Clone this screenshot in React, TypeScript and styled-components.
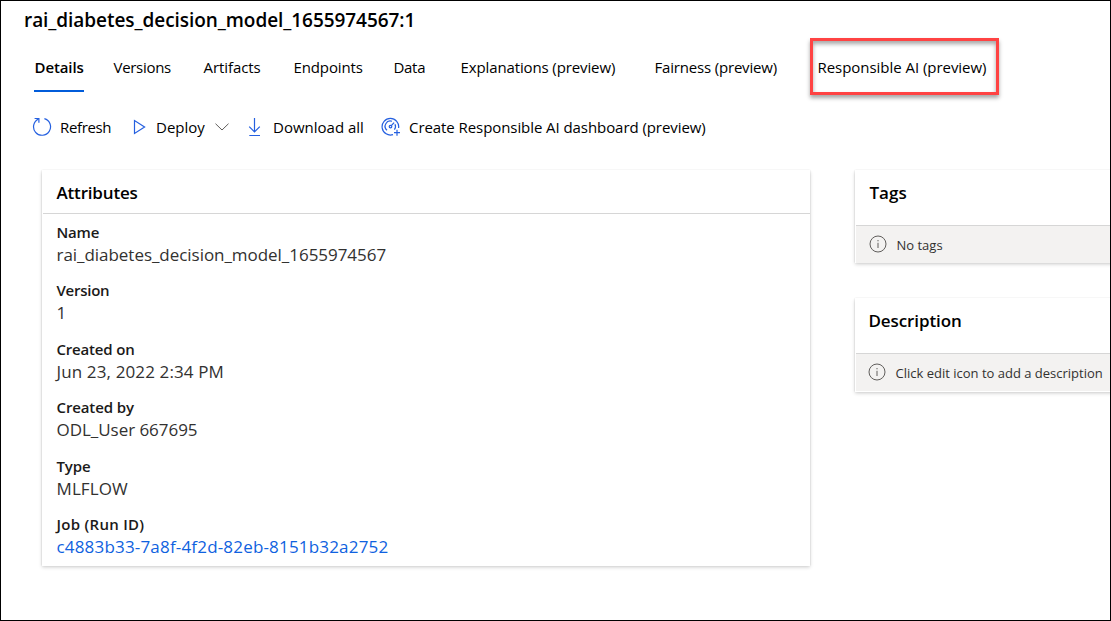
import React from "react";
import styled, { createGlobalStyle } from "styled-components";

const Global = createGlobalStyle`
  *, *::before, *::after { box-sizing: border-box; }
  html, body { margin: 0; padding: 0; background: #fff; }
  body { font-family: "Open Sans", "Noto Sans", sans-serif; color: #000; overflow: hidden; }
`;

const Page = styled.div`
  width: 1111px;
  height: 621px;
  border: 1px solid #000;
  background: #fff;
  overflow: hidden;
`;

const Title = styled.h1<{ $track: number }>`
  margin: 6px 0 0 23px;
  font-size: 19px;
  line-height: 26px;
  font-weight: 600;
  white-space: nowrap;
  letter-spacing: ${(p) => p.$track}px;
`;

const Tabs = styled.nav`
  display: grid;
  grid-template-columns: 79px 90px 90px 100px 67px 194px 156px 189px;
  margin: 5px 0 0 33px;
  height: 60px;
`;

const Tab = styled.div<{ $track?: number }>`
  padding: 18px 0 0 0.5px;
  font-size: 15px;
  line-height: 22px;
  white-space: nowrap;
  letter-spacing: ${(p) => p.$track ?? 0}px;
`;

const ActiveTab = styled(Tab)`
  width: 50px;
  height: 54px;
  font-weight: 600;
  border-bottom: 2px solid #015cda;
`;

const HighlightTab = styled(Tab)`
  height: 57px;
  padding: 15px 0 0 4.5px;
  border: 3px solid #ff4343;
  box-shadow: 0 3px 4px rgba(0, 0, 0, 0.35), inset 0 3px 4px rgba(0, 0, 0, 0.35);
`;

const Toolbar = styled.div`
  display: grid;
  grid-template-columns: 100px 115px 134px auto;
  margin: 17px 0 0 31px;
  height: 24px;
`;

const Action = styled.div<{ $gap: number; $track?: number }>`
  display: flex;
  align-items: center;
  gap: ${(p) => p.$gap}px;
  font-size: 15px;
  line-height: 24px;
  white-space: nowrap;
  letter-spacing: ${(p) => p.$track ?? 0}px;
  svg { flex: none; }
`;

const Content = styled.main`
  display: flex;
  align-items: flex-start;
  gap: 45px;
  padding: 31px 0 0 41px;
`;

const Side = styled.div`
  display: flex;
  flex-direction: column;
  gap: 35px;
`;

const Card = styled.section<{ $width: number; $height: number }>`
  width: ${(p) => p.$width}px;
  height: ${(p) => p.$height}px;
  flex: none;
  background: #fff;
  box-shadow: 0 1.6px 3.6px rgba(0, 0, 0, 0.18), 0 0.3px 1.6px rgba(0, 0, 0, 0.18);
`;

const CardTitle = styled.h2<{ $height: number; $indent: number; $track?: number }>`
  margin: 0 0 0 1px;
  height: ${(p) => p.$height}px;
  padding: 11px 0 0 ${(p) => p.$indent - 1.5}px;
  font-size: 17px;
  line-height: 24px;
  font-weight: 600;
  border-bottom: 1px solid #d6d6d6;
  letter-spacing: ${(p) => p.$track ?? 0}px;
`;

const Fields = styled.dl`
  margin: 0;
  padding: 7px 0 0 14.5px;
`;

const Field = styled.div`
  height: 58.4px;
`;

const Label = styled.dt<{ $track?: number }>`
  font-size: 15px;
  line-height: 22px;
  font-weight: 600;
  color: #1b1a19;
  letter-spacing: ${(p) => p.$track ?? 0}px;
`;

const Value = styled.dd<{ $link?: boolean; $track?: number }>`
  margin: 0;
  font-size: 17px;
  line-height: 23px;
  color: ${(p) => (p.$link ? "#0f62e0" : "#323130")};
  letter-spacing: ${(p) => p.$track ?? 0}px;
`;

const Message = styled.div<{ $indent: number; $track?: number }>`
  display: flex;
  gap: 9.5px;
  height: 37px;
  margin-left: 1px;
  padding: 9px 0 0 ${(p) => p.$indent}px;
  background: #f3f2f1;
  color: #323130;
  font-size: 13px;
  line-height: 21px;
  white-space: nowrap;
  letter-spacing: ${(p) => p.$track ?? 0}px;
`;

const blue = { fill: "none", stroke: "#2560e0", strokeWidth: 1.2 };

const RefreshIcon = () => (
  <svg width="20" height="20" viewBox="0 0 20 20" {...blue}>
    <path d="M12.4 1.6A8.5 8.5 0 1 1 6.6 2" />
    <path d="M2.6 1.5H6.9V5.8" />
  </svg>
);

const PlayIcon = () => (
  <svg width="14" height="18" viewBox="0 0 14 18" {...blue}>
    <path d="M2.5 2.6V15.4L12.6 9Z" />
  </svg>
);

const ChevronIcon = () => (
  <svg width="14" height="8" viewBox="0 0 14 8" fill="none" stroke="#605e5c" strokeWidth="1">
    <path d="M.5.7L7 7L13.5.7" />
  </svg>
);

const DownloadIcon = () => (
  <svg width="14" height="20" viewBox="0 0 14 20" {...blue}>
    <path d="M7.5 1V15M2.2 9.7L7.5 15L12.8 9.7M2.3 18.5H13" />
  </svg>
);

const GaugeIcon = () => (
  <svg width="20" height="20" viewBox="0 0 20 20" {...blue}>
    <path d="M12 17.6A8.3 8.3 0 1 1 17.6 11" />
    <path d="M6 13.2A5.2 5.2 0 0 1 11 4.3M14 7.2A5.2 5.2 0 0 1 13.4 12.6" />
    <path d="M10.3 8.7L13.1 5.6" />
    <circle cx="9.5" cy="9.6" r="1.3" />
    <path d="M16 12.7V18.7M13 15.7H19" />
  </svg>
);

const InfoIcon = () => (
  <svg width="18" height="18" viewBox="0 0 18 18" fill="none" stroke="#605e5c">
    <circle cx="9" cy="9" r="8" />
    <path d="M9 7.8V13M9 5V6.3" />
  </svg>
);

const fields: { label: string; value: string; lt: number; vt: number; link?: boolean }[] = [
  { label: "Name", value: "rai_diabetes_decision_model_1655974567", lt: -0.2, vt: -0.04 },
  { label: "Version", value: "1", lt: -0.25, vt: 0 },
  { label: "Created on", value: "Jun 23, 2022 2:34 PM", lt: -0.18, vt: 0.13 },
  { label: "Created by", value: "ODL_User 667695", lt: -0.12, vt: -0.04 },
  { label: "Type", value: "MLFLOW", lt: -0.1, vt: 0.1 },
  { label: "Job (Run ID)", value: "c4883b33-7a8f-4f2d-82eb-8151b32a2752", lt: 0.28, vt: 0.18, link: true },
];

export default function App() {
  return (
    <Page>
      <Global />
      <Title $track={-0.06}>rai_diabetes_decision_model_1655974567:1</Title>
      <Tabs>
        <ActiveTab $track={-0.1}>Details</ActiveTab>
        <Tab $track={-0.3}>Versions</Tab>
        <Tab $track={-0.08}>Artifacts</Tab>
        <Tab $track={-0.12}>Endpoints</Tab>
        <Tab $track={-0.3}>Data</Tab>
        <Tab $track={-0.12}>Explanations (preview)</Tab>
        <Tab $track={-0.18}>Fairness (preview)</Tab>
        <HighlightTab $track={-0.04}>Responsible AI (preview)</HighlightTab>
      </Tabs>
      <Toolbar>
        <Action $gap={8} $track={-0.35}><RefreshIcon />Refresh</Action>
        <Action $gap={10}><PlayIcon />Deploy<ChevronIcon /></Action>
        <Action $gap={12}><DownloadIcon />Download all</Action>
        <Action $gap={8} $track={-0.07}><GaugeIcon />Create Responsible AI dashboard (preview)</Action>
      </Toolbar>
      <Content>
        <Card $width={768} $height={396}>
          <CardTitle $height={44} $indent={15} $track={-0.18}>Attributes</CardTitle>
          <Fields>
            {fields.map((f) => (
              <Field key={f.label}>
                <Label $track={f.lt}>{f.label}</Label>
                <Value $track={f.vt} $link={f.link}>{f.value}</Value>
              </Field>
            ))}
          </Fields>
        </Card>
        <Side>
          <Card $width={270} $height={93}>
            <CardTitle $height={56} $indent={15}>Tags</CardTitle>
            <Message $indent={13}><InfoIcon />No tags</Message>
          </Card>
          <Card $width={270} $height={94}>
            <CardTitle $height={56} $indent={14} $track={-0.1}>Description</CardTitle>
            <Message $indent={12}><InfoIcon />Click edit icon to add a description</Message>
          </Card>
        </Side>
      </Content>
    </Page>
  );
}
